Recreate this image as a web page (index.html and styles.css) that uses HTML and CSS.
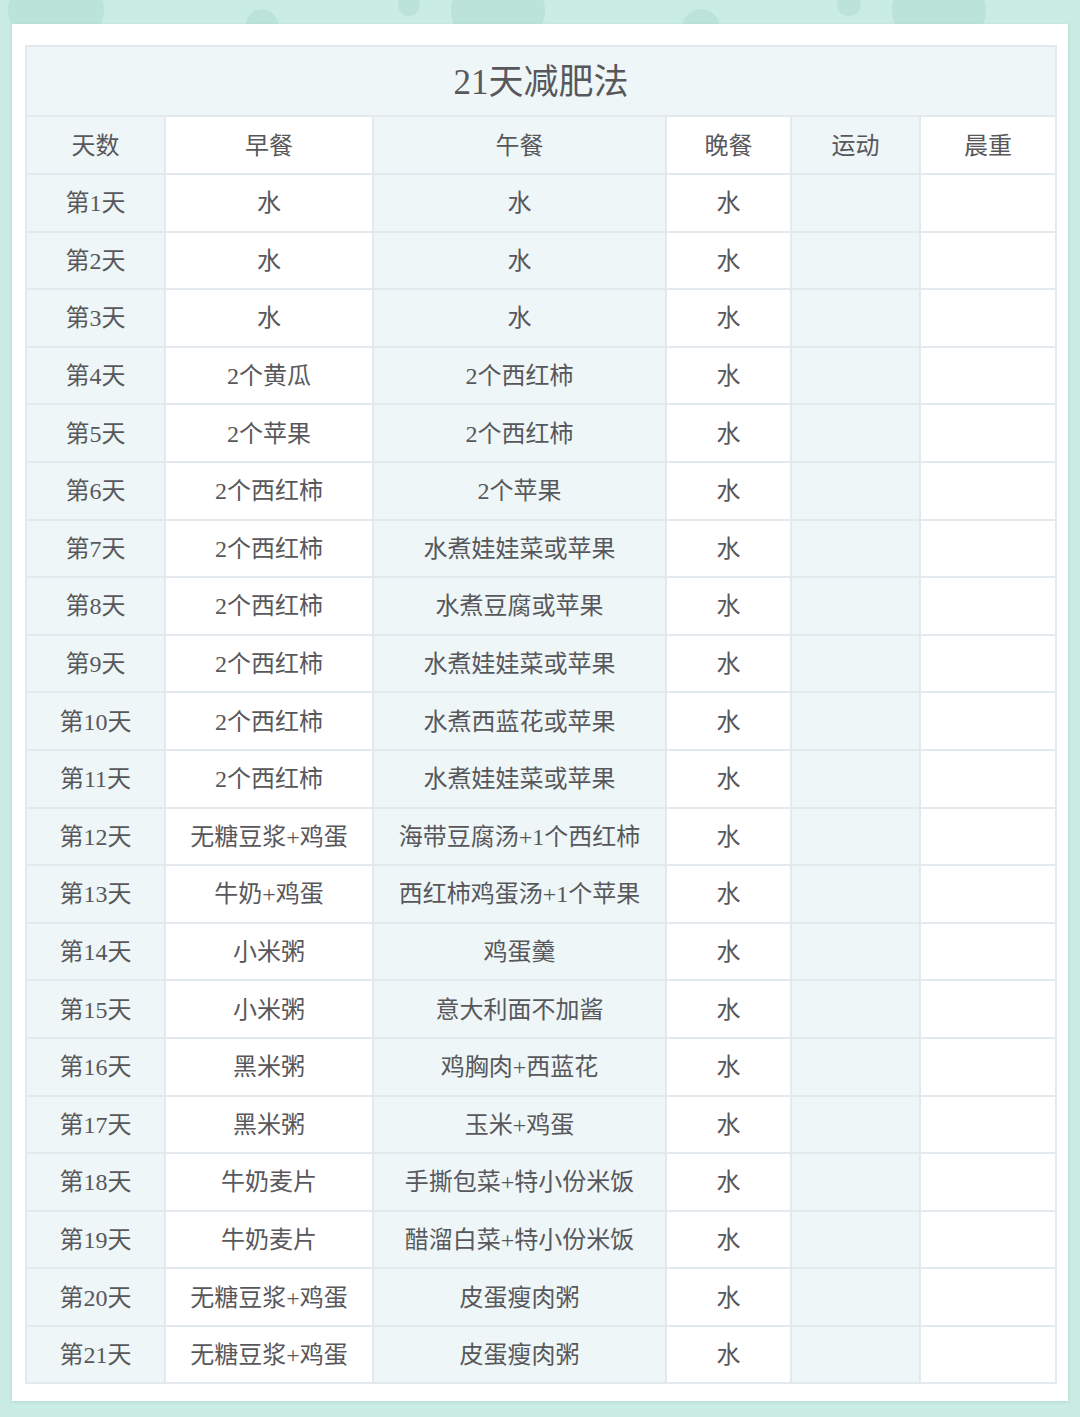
FILE: index.html
```html
<!DOCTYPE html>
<html lang="zh">
<head>
<meta charset="utf-8">
<link rel="stylesheet" href="styles.css">
</head>
<body>
<div class="page">
  <div class="dots">
    <span class="dot d1"></span><span class="dot d2"></span><span class="dot d3"></span><span class="dot d4"></span>
    <span class="dot d5"></span><span class="dot d6"></span><span class="dot d7"></span>
  </div>
  <div class="card">
    <table class="plan">
      <colgroup>
        <col class="c1"><col class="c2"><col class="c3"><col class="c4"><col class="c5"><col class="c6">
      </colgroup>
      <thead>
        <tr class="title-row"><th colspan="6">21天减肥法</th></tr>
        <tr class="head-row"><th>天数</th><th>早餐</th><th>午餐</th><th>晚餐</th><th>运动</th><th>晨重</th></tr>
      </thead>
      <tbody>
        <tr><td>第1天</td><td>水</td><td>水</td><td>水</td><td></td><td></td></tr>
        <tr><td>第2天</td><td>水</td><td>水</td><td>水</td><td></td><td></td></tr>
        <tr><td>第3天</td><td>水</td><td>水</td><td>水</td><td></td><td></td></tr>
        <tr><td>第4天</td><td>2个黄瓜</td><td>2个西红柿</td><td>水</td><td></td><td></td></tr>
        <tr><td>第5天</td><td>2个苹果</td><td>2个西红柿</td><td>水</td><td></td><td></td></tr>
        <tr><td>第6天</td><td>2个西红柿</td><td>2个苹果</td><td>水</td><td></td><td></td></tr>
        <tr><td>第7天</td><td>2个西红柿</td><td>水煮娃娃菜或苹果</td><td>水</td><td></td><td></td></tr>
        <tr><td>第8天</td><td>2个西红柿</td><td>水煮豆腐或苹果</td><td>水</td><td></td><td></td></tr>
        <tr><td>第9天</td><td>2个西红柿</td><td>水煮娃娃菜或苹果</td><td>水</td><td></td><td></td></tr>
        <tr><td>第10天</td><td>2个西红柿</td><td>水煮西蓝花或苹果</td><td>水</td><td></td><td></td></tr>
        <tr><td>第11天</td><td>2个西红柿</td><td>水煮娃娃菜或苹果</td><td>水</td><td></td><td></td></tr>
        <tr><td>第12天</td><td>无糖豆浆+鸡蛋</td><td>海带豆腐汤+1个西红柿</td><td>水</td><td></td><td></td></tr>
        <tr><td>第13天</td><td>牛奶+鸡蛋</td><td>西红柿鸡蛋汤+1个苹果</td><td>水</td><td></td><td></td></tr>
        <tr><td>第14天</td><td>小米粥</td><td>鸡蛋羹</td><td>水</td><td></td><td></td></tr>
        <tr><td>第15天</td><td>小米粥</td><td>意大利面不加酱</td><td>水</td><td></td><td></td></tr>
        <tr><td>第16天</td><td>黑米粥</td><td>鸡胸肉+西蓝花</td><td>水</td><td></td><td></td></tr>
        <tr><td>第17天</td><td>黑米粥</td><td>玉米+鸡蛋</td><td>水</td><td></td><td></td></tr>
        <tr><td>第18天</td><td>牛奶麦片</td><td>手撕包菜+特小份米饭</td><td>水</td><td></td><td></td></tr>
        <tr><td>第19天</td><td>牛奶麦片</td><td>醋溜白菜+特小份米饭</td><td>水</td><td></td><td></td></tr>
        <tr><td>第20天</td><td>无糖豆浆+鸡蛋</td><td>皮蛋瘦肉粥</td><td>水</td><td></td><td></td></tr>
        <tr><td>第21天</td><td>无糖豆浆+鸡蛋</td><td>皮蛋瘦肉粥</td><td>水</td><td></td><td></td></tr>
      </tbody>
    </table>
  </div>
</div>
</body>
</html>
```
FILE: styles.css
```css
html, body {
  margin: 0;
  padding: 0;
  background: #c9ece4;
}
body {
  width: 1080px;
  height: 1417px;
  overflow: hidden;
  font-family: "Liberation Serif", "Noto Sans CJK SC", sans-serif;
  color: #58585c;
}
.page {
  position: relative;
  padding: 24px 12px 17px 12px;
}
.dots {
  position: absolute;
  left: 0;
  top: 0;
  width: 1080px;
  height: 30px;
  overflow: hidden;
}
.dot {
  position: absolute;
  background: #bce3d9;
  border-radius: 50%;
}
.d1 { left: 8px; top: -30px; width: 96px; height: 80px; }
.d2 { left: 245px; top: 9px; width: 34px; height: 40px; }
.d3 { left: 398px; top: -6px; width: 22px; height: 22px; }
.d4 { left: 451px; top: -30px; width: 94px; height: 80px; }
.d5 { left: 682px; top: 9px; width: 38px; height: 40px; }
.d6 { left: 837px; top: -6px; width: 24px; height: 22px; }
.d7 { left: 892px; top: -30px; width: 94px; height: 80px; }
.card {
  position: relative;
  background: #ffffff;
  padding: 21px 13px 17px 13px;
  box-shadow: 0 1px 3px rgba(120, 160, 150, 0.25);
}
.plan {
  width: 1030px;
  border-collapse: collapse;
  table-layout: fixed;
  border: 1px solid #e2eaee;
}
.c1 { width: 139px; background: #eef6f7; }
.c2 { width: 208px; background: #ffffff; }
.c3 { width: 293px; background: #eef6f7; }
.c4 { width: 125px; background: #ffffff; }
.c5 { width: 129px; background: #eef6f7; }
.c6 { width: 136px; background: #ffffff; }
.plan th, .plan td {
  border: 2px solid #e2eaee;
  text-align: center;
  vertical-align: middle;
  font-weight: normal;
  padding: 1px 0 0 0;
  font-size: 24px;
  line-height: 1;
}
.title-row th {
  height: 66px;
  padding-top: 2px;
  background: #eef6f7;
  font-size: 35px;
}
.head-row th {
  height: 55px;
}
.plan tbody td {
  height: 54.6px;
}
```
